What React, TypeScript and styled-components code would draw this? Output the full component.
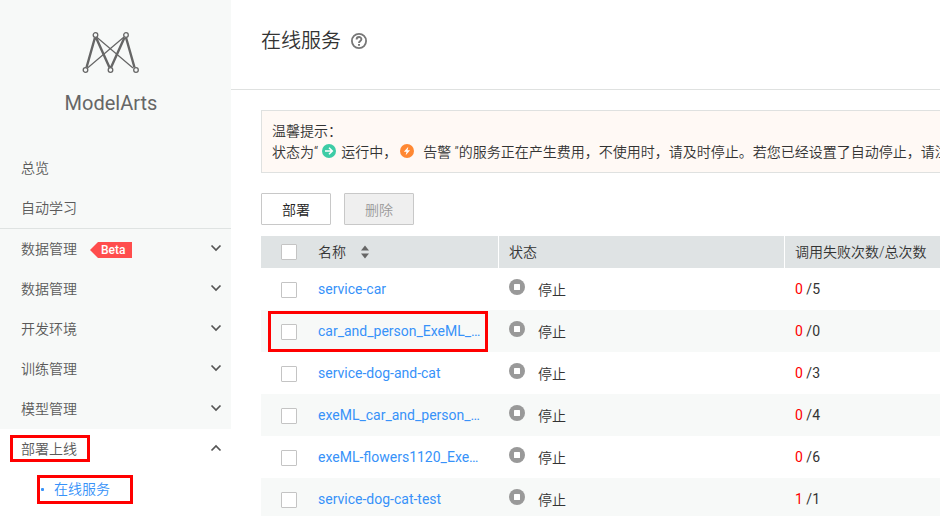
import React from "react";
import styled, { createGlobalStyle, css } from "styled-components";

const GlobalStyle = createGlobalStyle`
  *, *::before, *::after { box-sizing: border-box; }
  html, body { margin: 0; height: 100%; }
  #root { height: 100%; overflow: hidden; }
  body {
    font-family: Roboto, "Noto Sans CJK SC", sans-serif;
    font-size: 14px;
    line-height: 20px;
    color: #333;
    background: #fff;
  }
  a { text-decoration: none; color: inherit; }
  svg { display: block; flex: none; }
`;

const lightText = css`
  font-family: Roboto, "Noto Sans CJK SC DemiLight", "Noto Sans CJK SC", sans-serif;
  font-weight: 350;
`;

const Page = styled.div`
  display: flex;
  min-height: 100%;
`;

const Sidebar = styled.aside`
  flex: none;
  width: 231px;
  background: #f7f9f8;
  color: #5a5a5a;
`;

const Brand = styled.div`
  display: flex;
  flex-direction: column;
  align-items: center;
  gap: 16px;
  padding: 32px 9px 32px 0;
  font-size: 20px;
  line-height: 26px;
  color: #666;
`;

const NavGroup = styled.ul<{ $divided?: boolean; $open?: boolean }>`
  list-style: none;
  margin: 0;
  padding: 0;
  ${lightText}
  ${(p) => p.$divided && css`border-bottom: 1px solid #dfe3e2;`}
  ${(p) => p.$open && css`background: #fff; padding-bottom: 10px;`}
`;

const NavItem = styled.li`
  position: relative;
  height: 40px;
`;

const navRow = css`
  display: flex;
  align-items: center;
  width: 100%;
  height: 40px;
  padding: 0 8px 0 21px;
`;

const NavLink = styled.a`
  ${navRow}
`;

const NavToggle = styled.button`
  ${navRow}
  border: 0;
  background: none;
  font: inherit;
  color: inherit;
  text-align: left;
  cursor: pointer;

  & > svg { margin-left: auto; }
`;

const SubLink = styled.a`
  ${navRow}
  padding-left: 41px;
  gap: 10px;
  color: #3792f9;

  &::before {
    content: "";
    width: 3px;
    height: 3px;
    border-radius: 1px;
    background: currentColor;
  }
`;

const BetaTag = styled.span`
  margin: 2px 0 0 13px;
  padding: 0 7px 0 11px;
  background: #ff4d4d;
  clip-path: polygon(0 50%, 8px 0, 100% 0, 100% 100%, 8px 100%);
  color: #fff;
  font-size: 12px;
  font-weight: 500;
  line-height: 16px;
`;

const Highlight = styled.span<{ $x: number; $y: number; $w: number; $h: number }>`
  position: absolute;
  left: ${(p) => p.$x}px;
  top: ${(p) => p.$y}px;
  width: ${(p) => p.$w}px;
  height: ${(p) => p.$h}px;
  border: 3px solid #f00;
  pointer-events: none;
  z-index: 1;
`;

const Main = styled.main`
  flex: 1;
  min-width: 0;
  overflow: hidden;
`;

const Header = styled.header`
  display: flex;
  align-items: center;
  gap: 10px;
  height: 90px;
  padding: 0 30px 7px;
  border-bottom: 1px solid #dfe1e0;
`;

const Title = styled.h1`
  margin: 0;
  font-size: 20px;
  line-height: 28px;
  ${lightText}
`;

const IconButton = styled.button`
  padding: 0;
  border: 0;
  background: none;
  color: #777;
  cursor: pointer;
`;

const Content = styled.div`
  padding: 20px 0 0 30px;
`;

const Notice = styled.section`
  padding: 10px 0 9px 10px;
  border: 1px solid #dfe1e0;
  border-right: 0;
  background: #fff9f5;
  line-height: 21px;
  white-space: nowrap;
  overflow: hidden;
  ${lightText}
`;

const NoticeLine = styled.div`
  display: flex;
  align-items: center;
`;

const StateMark = styled.span<{ $wide?: boolean }>`
  flex: none;
  display: inline-flex;
  margin: ${(p) => (p.$wide ? "0 9px 3px 3px" : "0 5px 3px 4px")};
`;

const Toolbar = styled.div`
  display: flex;
  gap: 13px;
  padding: 20px 0 11px;
`;

const Button = styled.button`
  width: 70px;
  height: 32px;
  padding: 0;
  border: 1px solid #c8c8c8;
  border-radius: 1px;
  background: #fff;
  color: #222;
  font-size: 14px;
  cursor: pointer;
  ${lightText}

  &:disabled {
    background: #efefef;
    color: #999;
    cursor: default;
  }
`;

const Table = styled.table`
  width: 100%;
  table-layout: fixed;
  border-collapse: separate;
  border-spacing: 0;
`;

const Col = styled.col<{ $w?: number }>`
  width: ${(p) => (p.$w ? `${p.$w}px` : "auto")};
`;

const HeadCell = styled.th<{ $first?: boolean; $divided?: boolean }>`
  height: 32px;
  padding: ${(p) => (p.$first ? "0 0 0 20px" : "0 0 0 10px")};
  background: #dfe3e4;
  text-align: left;
  white-space: nowrap;
  ${lightText}
  ${(p) => p.$divided && css`border-right: 1px solid #fff;`}
`;

const NameHead = styled(HeadCell)`
  padding-left: 0;
`;

const Row = styled.tr`
  &:nth-child(even) { background: #f7f9f8; }
`;

const Cell = styled.td<{ $first?: boolean; $name?: boolean }>`
  position: relative;
  height: 42px;
  padding: ${(p) => (p.$name ? "0" : p.$first ? "2px 0 0 20px" : "0 0 0 10px")};
  white-space: nowrap;
`;

const Checkbox = styled.input`
  appearance: none;
  display: block;
  width: 16px;
  height: 16px;
  margin: 0;
  border: 1px solid #c4c4c4;
  border-radius: 1px;
  background: #fff;

  &:checked { background: #3792f9; }
`;

const HeadLabel = styled.span`
  display: flex;
  align-items: center;
  gap: 15px;
`;

const ServiceLink = styled.a`
  color: #3792f9;
`;

const Status = styled.span`
  display: flex;
  align-items: center;
  gap: 13px;
  ${lightText}

  & > svg { margin-bottom: 4px; }
  & > span { padding-top: 2px; }
`;

const Failed = styled.span`
  color: #f00;
`;

const Logo = () => (
  <svg width="58" height="42" viewBox="0 0 58 42" fill="none" stroke="#666" aria-hidden="true">
    <path d="M14.5 5 L51 36 M42 5 L5.500 36" strokeWidth="1.200" />
    <path d="M13 5.500 L4.500 35.500 M14 5.500 L27.500 35.500 M42.500 5.500 L29 35.500 M44 5.500 L52.500 35.500" strokeWidth="2.400" />
    <g fill="#f7f9f8" strokeWidth="1.300">
      <circle cx="13.500" cy="3" r="2.300" />
      <circle cx="44" cy="3" r="2.300" />
      <circle cx="3.500" cy="38" r="2.300" />
      <circle cx="28.500" cy="38" r="2.300" />
      <circle cx="54" cy="38" r="2.300" />
    </g>
  </svg>
);

const Chevron = ({ up }: { up?: boolean }) => (
  <svg width="14" height="10" viewBox="0 0 14 10" fill="none" stroke="#555" strokeWidth="1.700" aria-hidden="true">
    <path d={up ? "M2.500 6.500 L7 2 L11.500 6.500" : "M2.500 1.500 L7 6 L11.500 1.500"} />
  </svg>
);

const HelpIcon = () => (
  <svg width="16" height="16" viewBox="0 0 16 16" fill="none" stroke="currentColor" aria-hidden="true">
    <circle cx="8" cy="8" r="7.100" strokeWidth="1.800" />
    <path d="M5.600 6.500 C5.600 3.200 10.500 3.300 10.400 6.300 C10.300 7.900 8 8 8 10" strokeWidth="1.900" />
    <path d="M8 11 V12.800" strokeWidth="2" />
  </svg>
);

const RunningIcon = () => (
  <svg width="14" height="14" viewBox="0 0 14 14" role="img" aria-label="running">
    <circle cx="7" cy="7" r="7" fill="#3dcca6" />
    <path d="M3 7 H10 M7 3.800 L10.300 7 L7 10.200" fill="none" stroke="#fff" strokeWidth="1.500" />
  </svg>
);

const AlarmIcon = () => (
  <svg width="14" height="14" viewBox="0 0 14 14" role="img" aria-label="alarm">
    <circle cx="7" cy="7" r="7" fill="#ff8833" />
    <path d="M8.300 2.800 L3.900 7.700 H6.500 L5.700 11.200 L10.100 6.300 H7.500 Z" fill="#fff" />
  </svg>
);

const StopIcon = () => (
  <svg width="16" height="16" viewBox="0 0 16 16" aria-hidden="true">
    <circle cx="8" cy="8" r="8" fill="#999" />
    <rect x="5" y="5" width="6" height="6" rx="0.500" fill="#fff" />
  </svg>
);

const SortIcon = () => (
  <svg width="8" height="14" viewBox="0 0 8 14" fill="#666" aria-hidden="true">
    <path d="M0 5.500 L4 0.500 L8 5.500 Z M0 8.500 L4 13.500 L8 8.500 Z" />
  </svg>
);

const sections = [
  { label: "数据管理", beta: true },
  { label: "数据管理" },
  { label: "开发环境" },
  { label: "训练管理" },
  { label: "模型管理" },
];

const services = [
  { name: "service-car", failed: 0, total: 5 },
  { name: "car_and_person_ExeML_…", failed: 0, total: 0, marked: true },
  { name: "service-dog-and-cat", failed: 0, total: 3 },
  { name: "exeML_car_and_person_…", failed: 0, total: 4 },
  { name: "exeML-flowers1120_Exe…", failed: 0, total: 6 },
  { name: "service-dog-cat-test", failed: 1, total: 1 },
];

export default function App() {
  return (
    <>
      <GlobalStyle />
      <Page>
        <Sidebar>
          <Brand>
            <Logo />
            <span>ModelArts</span>
          </Brand>
          <nav>
            <NavGroup $divided>
              <NavItem><NavLink href="#overview">总览</NavLink></NavItem>
              <NavItem><NavLink href="#exeml">自动学习</NavLink></NavItem>
            </NavGroup>
            <NavGroup>
              {sections.map((s, i) => (
                <NavItem key={i}>
                  <NavToggle type="button" aria-expanded={false}>
                    {s.label}
                    {s.beta && <BetaTag>Beta</BetaTag>}
                    <Chevron />
                  </NavToggle>
                </NavItem>
              ))}
            </NavGroup>
            <NavGroup $open>
              <NavItem>
                <NavToggle type="button" aria-expanded>
                  部署上线
                  <Chevron up />
                </NavToggle>
                <Highlight $x={10} $y={6} $w={80} $h={27} />
              </NavItem>
              <NavItem>
                <SubLink href="#services" aria-current="page">在线服务</SubLink>
                <Highlight $x={37} $y={6} $w={96} $h={29} />
              </NavItem>
            </NavGroup>
          </nav>
        </Sidebar>
        <Main>
          <Header>
            <Title>在线服务</Title>
            <IconButton type="button" aria-label="help"><HelpIcon /></IconButton>
          </Header>
          <Content>
            <Notice>
              <div>温馨提示：</div>
              <NoticeLine>
                <span>状态为“</span>
                <StateMark><RunningIcon /></StateMark>
                <span>运行中，</span>
                <StateMark $wide><AlarmIcon /></StateMark>
                <span>告警 ”的服务正在产生费用，不使用时，请及时停止。若您已经设置了自动停止，请注</span>
              </NoticeLine>
            </Notice>
            <Toolbar>
              <Button type="button">部署</Button>
              <Button type="button" disabled>删除</Button>
            </Toolbar>
            <Table>
              <colgroup>
                <Col $w={57} />
                <Col $w={181} />
                <Col $w={286} />
                <Col />
              </colgroup>
              <thead>
                <tr>
                  <HeadCell $first><Checkbox type="checkbox" aria-label="select all" /></HeadCell>
                  <NameHead $divided><HeadLabel>名称<SortIcon /></HeadLabel></NameHead>
                  <HeadCell $divided>状态</HeadCell>
                  <HeadCell>调用失败次数/总次数</HeadCell>
                </tr>
              </thead>
              <tbody>
                {services.map((s) => (
                  <Row key={s.name}>
                    <Cell $first>
                      <Checkbox type="checkbox" aria-label={s.name} />
                      {s.marked && <Highlight $x={7} $y={1} $w={220} $h={41} />}
                    </Cell>
                    <Cell $name><ServiceLink href="#service">{s.name}</ServiceLink></Cell>
                    <Cell><Status><StopIcon /><span>停止</span></Status></Cell>
                    <Cell><Failed>{s.failed}</Failed> /{s.total}</Cell>
                  </Row>
                ))}
              </tbody>
            </Table>
          </Content>
        </Main>
      </Page>
    </>
  );
}
